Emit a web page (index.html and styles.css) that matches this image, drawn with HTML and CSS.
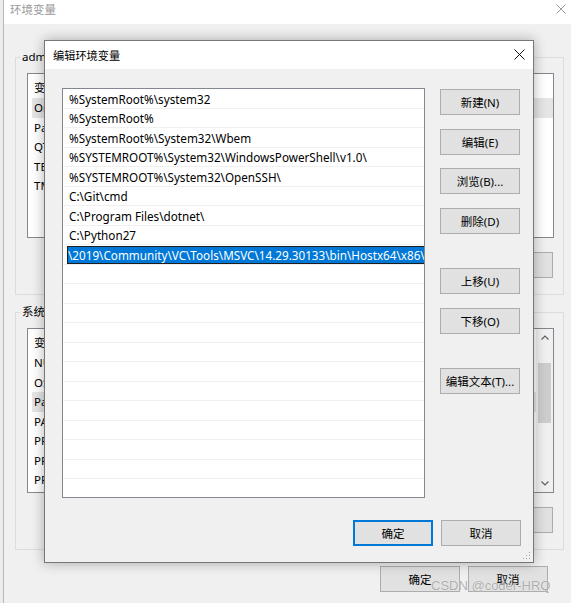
FILE: index.html
```html
<!DOCTYPE html>
<html lang="zh-CN">
<head>
<meta charset="utf-8">
<title>编辑环境变量</title>
<link rel="stylesheet" href="styles.css">
</head>
<body>
<div class="screen">
  <div class="edge"></div>
  <div class="bgwin">
    <div class="bg-title">
      <span class="bg-title-text">环境变量</span>
      <svg class="bg-x" width="10" height="10" viewBox="0 0 10 10"><path d="M0.5 0.5L9.5 9.5M9.5 0.5L0.5 9.5" stroke="#9a9a9a" stroke-width="1" fill="none"/></svg>
    </div>
    <div class="bg-content">
      <div class="group">
        <div class="group-label">administrator 的用户变量(U)</div>
        <div class="vlist">
          <div class="vcontent">
            <div class="vhead"><span class="vc1">变量</span><span>值</span></div>
            <div class="vrow vsel">OneDrive</div>
            <div class="vrow">Path</div>
            <div class="vrow">QT_PLUGIN_PATH</div>
            <div class="vrow">TEMP</div>
            <div class="vrow">TMP</div>
          </div>
        </div>
        <div class="btnrow">
          <button class="btn">新建(N)...</button>
          <button class="btn">编辑(E)...</button>
          <button class="btn">删除(D)</button>
        </div>
      </div>
      <div class="group group2">
        <div class="group-label">系统变量(S)</div>
        <div class="vlist">
          <div class="vcontent">
            <div class="vhead"><span class="vc1">变量</span><span>值</span></div>
            <div class="vrow">NUMBER_OF_PROCESSORS</div>
            <div class="vrow">OS</div>
            <div class="vrow vsel">Path</div>
            <div class="vrow">PATHEXT</div>
            <div class="vrow">PROCESSOR_ARCHITECTURE</div>
            <div class="vrow">PROCESSOR_IDENTIFIER</div>
            <div class="vrow">PROCESSOR_LEVEL</div>
          </div>
          <div class="vscroll">
            <div class="sbtn"><svg width="8" height="5" viewBox="0 0 8 5"><path d="M0.5 4.5L4 1L7.5 4.5" stroke="#606060" stroke-width="1.2" fill="none"/></svg></div>
            <div class="strack"><div class="sthumb"></div></div>
            <div class="sbtn"><svg width="8" height="5" viewBox="0 0 8 5"><path d="M0.5 0.5L4 4L7.5 0.5" stroke="#606060" stroke-width="1.2" fill="none"/></svg></div>
          </div>
        </div>
        <div class="btnrow">
          <button class="btn">新建(W)...</button>
          <button class="btn">编辑(I)...</button>
          <button class="btn">删除(L)</button>
        </div>
      </div>
      <div class="winbtns">
        <button class="btn">确定</button>
        <button class="btn">取消</button>
      </div>
    </div>
  </div>

  <div class="dialog">
    <div class="dlg-title">
      <span class="dlg-title-text">编辑环境变量</span>
      <svg class="dlg-x" width="11" height="11" viewBox="0 0 11 11"><path d="M0.5 0.5L10.5 10.5M10.5 0.5L0.5 10.5" stroke="#111" stroke-width="1" fill="none"/></svg>
    </div>
    <div class="dlg-body">
      <div class="plist">
        <div class="prow">%SystemRoot%\system32</div>
        <div class="prow">%SystemRoot%</div>
        <div class="prow">%SystemRoot%\System32\Wbem</div>
        <div class="prow">%SYSTEMROOT%\System32\WindowsPowerShell\v1.0\</div>
        <div class="prow">%SYSTEMROOT%\System32\OpenSSH\</div>
        <div class="prow">C:\Git\cmd</div>
        <div class="prow">C:\Program Files\dotnet\</div>
        <div class="prow">C:\Python27</div>
        <div class="prow prow-edit"><div class="edit"><span class="edit-sel">\2019\Community\VC\Tools\MSVC\14.29.30133\bin\Hostx64\x86\</span></div></div>
        <div class="prow"></div>
        <div class="prow"></div>
        <div class="prow"></div>
        <div class="prow"></div>
        <div class="prow"></div>
        <div class="prow"></div>
        <div class="prow"></div>
        <div class="prow"></div>
        <div class="prow"></div>
        <div class="prow"></div>
        <div class="prow"></div>
        <div class="prow"></div>
        <div class="prow"></div>
      </div>
      <div class="dlg-btns">
        <button class="btn">新建(N)</button>
        <button class="btn gap-s">编辑(E)</button>
        <button class="btn gap-s">浏览(B)...</button>
        <button class="btn gap-s">删除(D)</button>
        <button class="btn gap-l">上移(U)</button>
        <button class="btn gap-s">下移(O)</button>
        <button class="btn gap-l">编辑文本(T)...</button>
      </div>
    </div>
    <div class="dlg-foot">
      <button class="btn btn-default">确定</button>
      <button class="btn">取消</button>
    </div>
    <svg class="grip" width="9" height="9" viewBox="0 0 9 9">
      <rect x="7" y="1" width="1" height="1" fill="#a8a8a8"/>
      <rect x="4" y="4" width="1" height="1" fill="#a8a8a8"/>
      <rect x="7" y="4" width="1" height="1" fill="#a8a8a8"/>
      <rect x="1" y="7" width="1" height="1" fill="#a8a8a8"/>
      <rect x="4" y="7" width="1" height="1" fill="#a8a8a8"/>
      <rect x="7" y="7" width="1" height="1" fill="#a8a8a8"/>
    </svg>
  </div>

  <div class="watermark">CSDN @coder-HRQ</div>
</div>
</body>
</html>
```

FILE: styles.css
```css
html, body {
  margin: 0;
  padding: 0;
  background: #f0f0f0;
}

.screen {
  position: relative;
  width: 571px;
  height: 603px;
  overflow: hidden;
  display: flex;
  font-family: "Noto Sans", "Noto Sans CJK SC", sans-serif;
  font-size: 11.5px;
  color: #000;
}

.edge {
  width: 3px;
  flex: none;
  background: #ececec;
  border-right: 1px solid #b8b8b8;
}

.bgwin {
  flex: 1;
  background: #f0f0f0;
  display: flex;
  flex-direction: column;
}

.bg-title {
  height: 24px;
  flex: none;
  box-sizing: border-box;
  background: #fff;
  display: flex;
  justify-content: space-between;
  align-items: flex-start;
  padding: 3px 5px 0 6px;
  color: #9a9a9a;
}

.bg-title-text {
  line-height: 14px;
}

.bg-x {
  margin-top: 1px;
}

.bg-content {
  padding: 33px 7px 0 11px;
}

.group {
  border: 1px solid #dcdcdc;
  padding: 0 9px 16px 11px;
}

.group2 {
  margin-top: 17px;
}

.group-label {
  margin-top: -8px;
  margin-left: -7px;
  width: fit-content;
  padding: 0 2px;
  line-height: 14px;
  background: #f0f0f0;
  white-space: nowrap;
}

.vlist {
  margin-top: 9px;
  height: 165px;
  box-sizing: border-box;
  border: 1px solid #828790;
  background: #fff;
  overflow: hidden;
  display: flex;
}

.vcontent {
  flex: 1;
}

.vhead {
  height: 24px;
  line-height: 24px;
  padding: 2px 0 0 6px;
  box-sizing: border-box;
  display: flex;
}

.vc1 {
  width: 160px;
}

.vrow {
  height: 19.5px;
  line-height: 19.5px;
  padding-left: 6px;
  white-space: nowrap;
}

.vsel {
  margin-left: 4px;
  padding-left: 2px;
  background: #e5e5e5;
}

.vscroll {
  width: 17px;
  flex: none;
  background: #f0f0f0;
  display: flex;
  flex-direction: column;
}

.sbtn {
  height: 17px;
  display: flex;
  align-items: center;
  justify-content: center;
}

.strack {
  flex: 1;
}

.sthumb {
  margin: 17px 2px 0 2px;
  height: 60px;
  background: #cdcdcd;
}

.btnrow {
  display: flex;
  justify-content: flex-end;
  gap: 8px;
  margin-top: 14px;
  margin-right: 1px;
}

.winbtns {
  display: flex;
  justify-content: flex-end;
  gap: 8px;
  margin-top: 16px;
  padding-right: 16px;
}

.btn {
  width: 80px;
  height: 26px;
  box-sizing: border-box;
  margin: 0;
  padding: 0;
  background: #e1e1e1;
  border: 1px solid #adadad;
  font-family: inherit;
  font-size: 11.5px;
  color: #000;
  white-space: nowrap;
}

.btn-default {
  border-color: #0078d7;
  box-shadow: inset 0 0 0 1px #0078d7;
}

/* dialog */
.dialog {
  position: absolute;
  left: 44px;
  top: 40px;
  width: 490px;
  height: 523px;
  box-sizing: border-box;
  border: 1px solid #777;
  background: #f0f0f0;
  box-shadow: 0 0 12px rgba(0, 0, 0, 0.3);
  display: flex;
  flex-direction: column;
}

.dlg-title {
  height: 28px;
  flex: none;
  background: #fff;
  display: flex;
  align-items: center;
  justify-content: space-between;
  padding: 0 8px 0 8px;
}

.dlg-title-text {
  font-size: 11.2px;
}

.dlg-x {
  margin-top: -1px;
}

.dlg-body {
  display: grid;
  grid-template-columns: 363px 80px;
  column-gap: 15px;
  padding: 19px 0 0 17px;
}

.plist {
  height: 410px;
  box-sizing: border-box;
  border: 1px solid #828790;
  background: #fff;
  overflow: hidden;
}

.prow {
  height: 19.5px;
  box-sizing: border-box;
  border-bottom: 1px solid #f0f0f0;
  padding: 1.5px 0 0 6px;
  line-height: 17px;
  font-size: 11.7px;
  white-space: nowrap;
  overflow: hidden;
}

.prow-edit {
  padding: 1px 0 0 4px;
}

.edit {
  height: 18px;
  box-sizing: border-box;
  border: 1px solid #1e1e1e;
  border-right: none;
  overflow: hidden;
  white-space: nowrap;
}

.edit-sel {
  display: inline-block;
  height: 16px;
  line-height: 16px;
  background: #0078d7;
  color: #fff;
}

.dlg-btns {
  display: flex;
  flex-direction: column;
  padding-top: 1px;
}

.gap-s {
  margin-top: 13.5px;
}

.gap-l {
  margin-top: 34.5px;
}

.dlg-foot {
  display: flex;
  justify-content: flex-end;
  gap: 8px;
  margin-top: 22px;
  padding-right: 12px;
}

.grip {
  position: absolute;
  right: 2px;
  bottom: 2px;
}

.watermark {
  position: absolute;
  left: 431px;
  top: 578px;
  font-family: "Liberation Sans", Arial, sans-serif;
  font-size: 13px;
  line-height: 15px;
  color: rgba(110, 110, 110, 0.55);
  text-shadow: 0 0 1px rgba(255, 255, 255, 0.9);
  white-space: nowrap;
}
```
